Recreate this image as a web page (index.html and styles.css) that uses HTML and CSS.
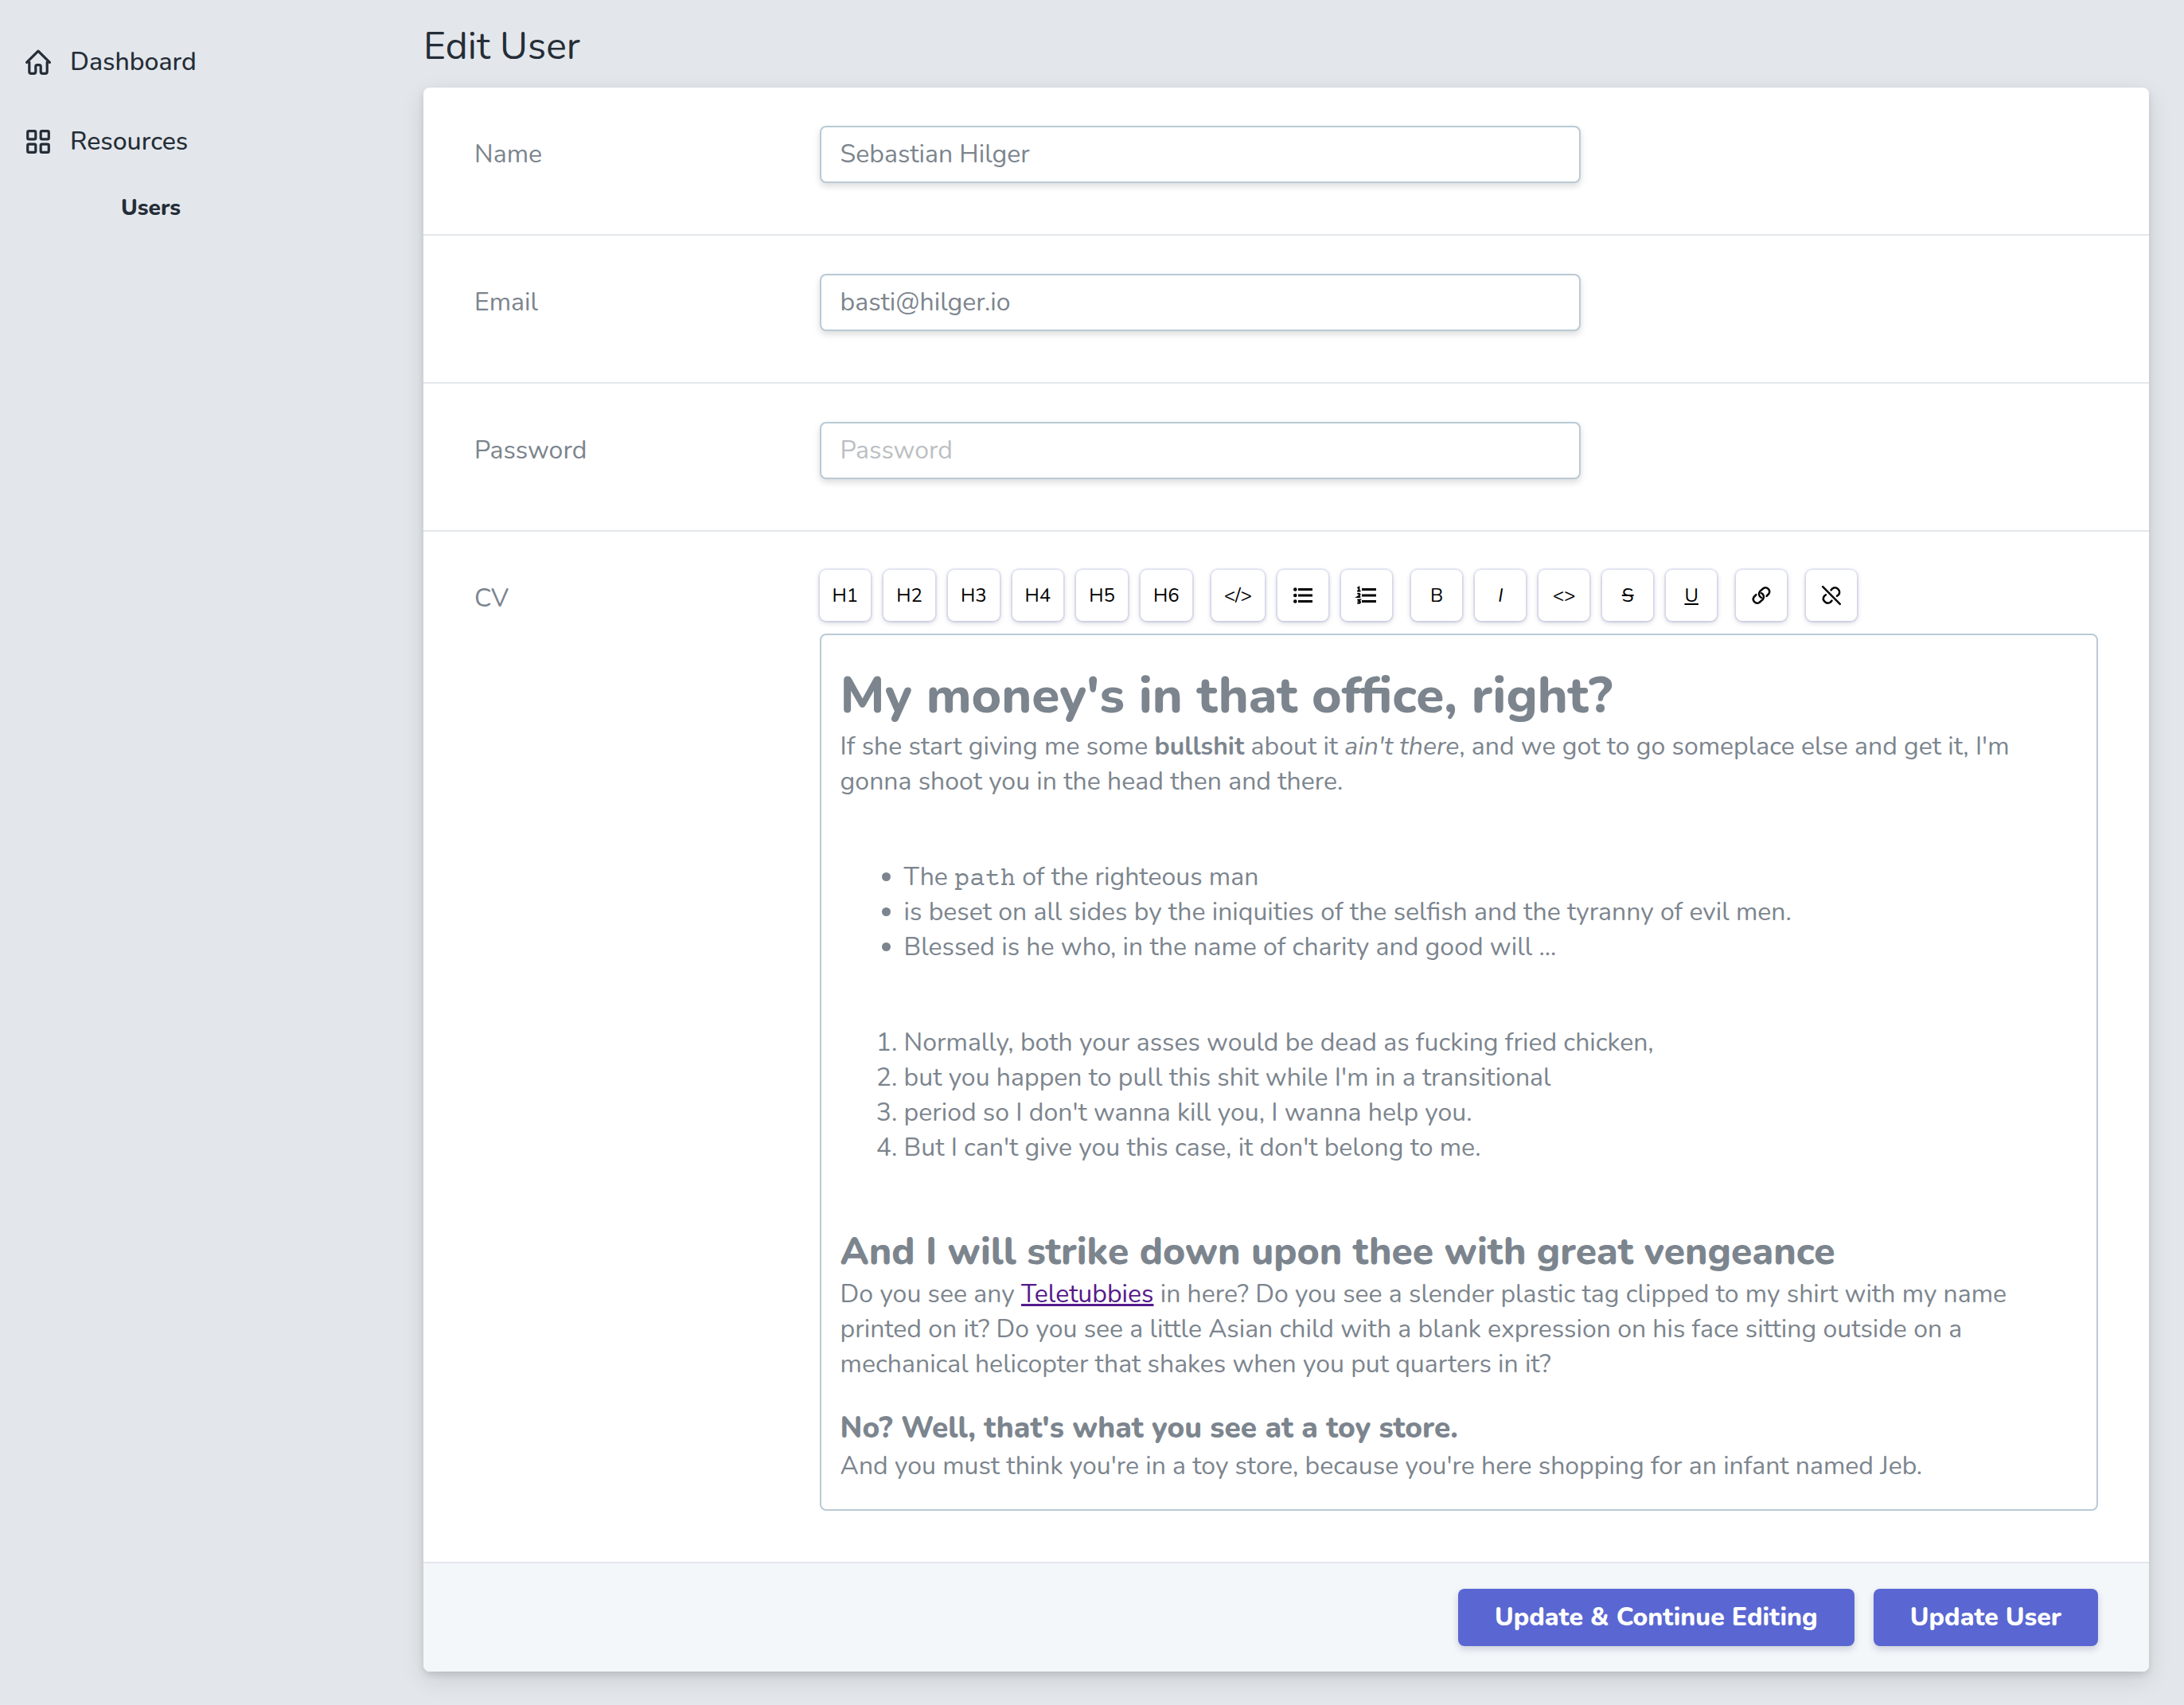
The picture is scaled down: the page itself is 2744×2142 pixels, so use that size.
FILE: index.html
```html
<!DOCTYPE html>
<html lang="en">
<head>
<meta charset="utf-8">
<meta name="viewport" content="width=device-width, initial-scale=1">
<title>Edit User</title>
<link rel="stylesheet" href="styles.css">
</head>
<body>
<div class="app">
  <nav class="sidebar">
    <a class="nav-link" href="#">
      <svg class="nav-icon" viewBox="0 0 20 20"><path class="line" d="M3 10v7.500A1.500 1.500 0 0 0 4.500 19H6.500A1.500 1.500 0 0 0 8 17.500V13.500a1.200 1.200 0 0 1 1.200-1.200h1.600a1.200 1.200 0 0 1 1.200 1.200V17.500A1.500 1.500 0 0 0 13.500 19H15.500A1.500 1.500 0 0 0 17 17.500V10M1 10.300L10 1.300l9 9"/></svg>
      <span>Dashboard</span>
    </a>
    <a class="nav-link" href="#">
      <svg class="nav-icon" viewBox="0 0 20 20"><g class="line"><rect x="1.700" y="1.700" width="6.300" height="6.300" rx="1"/><rect x="12" y="1.700" width="6.300" height="6.300" rx="1"/><rect x="1.700" y="12" width="6.300" height="6.300" rx="1"/><rect x="12" y="12" width="6.300" height="6.300" rx="1"/></g></svg>
      <span>Resources</span>
    </a>
    <a class="nav-sublink" href="#">Users</a>
  </nav>
  <main class="content">
    <h1 class="page-title">Edit User</h1>
    <form class="card">
      <div class="field">
        <label class="field-label" for="name">Name</label>
        <div class="field-body"><input class="text-input" id="name" type="text" value="Sebastian Hilger"></div>
      </div>
      <div class="field">
        <label class="field-label" for="email">Email</label>
        <div class="field-body"><input class="text-input" id="email" type="email" value="basti@hilger.io"></div>
      </div>
      <div class="field">
        <label class="field-label" for="password">Password</label>
        <div class="field-body"><input class="text-input" id="password" type="password" placeholder="Password"></div>
      </div>
      <div class="field">
        <span class="field-label" id="cv-label">CV</span>
        <div class="field-body field-body-wide">
          <div class="toolbar">
            <div class="tool-group">
              <button class="tool" type="button">H1</button>
              <button class="tool" type="button">H2</button>
              <button class="tool" type="button">H3</button>
              <button class="tool" type="button">H4</button>
              <button class="tool" type="button">H5</button>
              <button class="tool" type="button">H6</button>
            </div>
            <div class="tool-group">
              <button class="tool" type="button">&lt;/&gt;</button>
              <button class="tool" type="button" aria-label="Bullet list"><svg class="tool-icon" viewBox="0 0 24 24"><circle cx="2.300" cy="4.500" r="2.300"/><circle cx="2.300" cy="12" r="2.300"/><circle cx="2.300" cy="19.500" r="2.300"/><path d="M6 3h18v3H6zM6 10.500h18v3H6zM6 18h18v3H6z"/></svg></button>
              <button class="tool" type="button" aria-label="Numbered list"><svg class="tool-icon" viewBox="0 0 24 24"><path d="M6 3h18v3H6zM6 10.500h18v3H6zM6 18h18v3H6z"/><path class="numeral" d="M.4 2.600l2-.8v5M.2 6.600h4.300M.5 10.400q1.700-1.200 3 0 .6 1.300-3 3.600h3.800M.4 17.600h3.300L2.200 19.300q2 0 1.800 1.500-.9 1.700-3.600.6"/></svg></button>
            </div>
            <div class="tool-group">
              <button class="tool" type="button">B</button>
              <button class="tool" type="button"><i>I</i></button>
              <button class="tool" type="button">&lt;&gt;</button>
              <button class="tool" type="button"><s>S</s></button>
              <button class="tool" type="button"><u>U</u></button>
            </div>
            <div class="tool-group">
              <button class="tool" type="button" aria-label="Add link"><svg class="tool-icon" viewBox="0 0 24 24"><path class="chain" d="M12 14.800A5 5 0 0 1 10 7.200L14.600 3A5 5 0 0 1 21.400 9.900L18.600 12.800M12 9.200A5 5 0 0 1 14 16.800L9.400 21A5 5 0 0 1 2.600 14.100L5.400 11.200"/></svg></button>
            </div>
            <div class="tool-group">
              <button class="tool" type="button" aria-label="Remove link"><svg class="tool-icon" viewBox="0 0 24 24"><path class="chain" d="M11.500 5.300L13.200 3.400A5.600 5.600 0 0 1 21 11.200L19 12.700M12.500 18.700L10.800 20.600A5.600 5.600 0 0 1 3 12.800L5 11.300M1.200 1.200l21.600 21.600"/></svg></button>
            </div>
          </div>
          <div class="editor" contenteditable="true" role="textbox" aria-multiline="true" aria-labelledby="cv-label" spellcheck="false">
            <h1>My money's in that office, right?</h1>
            <p>If she start giving me some <strong>bullshit</strong> about it <em>ain't there</em>, and we got to go someplace else and get it, I'm gonna shoot you in the head then and there.</p>
            <ul>
              <li>The <code>path</code> of the righteous man</li>
              <li>is beset on all sides by the iniquities of the selfish and the tyranny of evil men.</li>
              <li>Blessed is he who, in the name of charity and good will ...</li>
            </ul>
            <ol>
              <li>Normally, both your asses would be dead as fucking fried chicken,</li>
              <li>but you happen to pull this shit while I'm in a transitional</li>
              <li>period so I don't wanna kill you, I wanna help you.</li>
              <li>But I can't give you this case, it don't belong to me.</li>
            </ol>
            <h2>And I will strike down upon thee with great vengeance</h2>
            <p>Do you see any <a href="#">Teletubbies</a> in here? Do you see a slender plastic tag clipped to my shirt with my name printed on it? Do you see a little Asian child with a blank expression on his face sitting outside on a mechanical helicopter that shakes when you put quarters in it?</p>
            <h3>No? Well, that's what you see at a toy store.</h3>
            <p>And you must think you're in a toy store, because you're here shopping for an infant named Jeb.</p>
          </div>
        </div>
      </div>
      <div class="actions">
        <button class="primary" type="button">Update &amp; Continue Editing</button>
        <button class="primary" type="submit">Update User</button>
      </div>
    </form>
  </main>
</div>
</body>
</html>
```
FILE: styles.css
```css
* { box-sizing: border-box; }
body {
  margin: 0;
  min-height: 100vh;
  background: #e3e7eb;
  color: #7c858e;
  font-family: Nunito, Lato, sans-serif;
  font-size: 32px;
  font-weight: 400;
  line-height: 44px;
}
button, input { font: inherit; }
.app { display: flex; }
.sidebar {
  flex: 0 0 532px;
  display: flex;
  flex-direction: column;
  align-items: flex-start;
  padding: 56px 32px;
}
.nav-link {
  display: flex;
  align-items: center;
  gap: 24px;
  margin-bottom: 56px;
  color: #252d37;
  font-weight: 500;
  text-decoration: none;
}
.nav-icon { width: 32px; height: 32px; overflow: visible; }
.line { fill: none; stroke: #252d37; stroke-width: 2; stroke-linecap: round; stroke-linejoin: round; }
.nav-sublink {
  margin: -17px 0 0 120px;
  color: #252d37;
  font-size: 28px;
  font-weight: 800;
  text-decoration: none;
}
.content { flex: 1; min-width: 0; padding: 30px 44px 42px 0; }
.page-title {
  margin: 0 0 24px;
  color: #252d37;
  font-size: 48px;
  font-weight: 400;
  line-height: 56px;
}
.card {
  border-radius: 8px;
  background: #fff;
  box-shadow: 0 4px 8px rgba(0, 0, 0, .11), 0 10px 30px rgba(0, 0, 0, .11);
}
.field { display: flex; border-bottom: 2px solid #e3e7eb; }
.field-label { width: 20%; padding: 62px 64px 0; }
.field-body { width: 50%; padding: 48px 64px 64px; }
.field-body-wide { width: 80%; }
.text-input {
  display: block;
  width: 100%;
  height: 72px;
  padding: 0 24px 2px;
  border: 2px solid #bacad6;
  border-radius: 8px;
  background: #fff;
  color: #7c858e;
  box-shadow: 0 4px 8px rgba(0, 0, 0, .14);
}
.text-input::placeholder { color: #bcbfc3; opacity: 1; }
.toolbar { display: flex; flex-wrap: wrap; gap: 24px; margin-bottom: 16px; }
.tool-group { display: flex; gap: 16px; }
.tool {
  display: flex;
  align-items: center;
  justify-content: center;
  min-width: 64px;
  height: 64px;
  padding: 0 16px;
  border: 0;
  border-radius: 8px;
  background: #fff;
  color: #000;
  box-shadow: 0 0 0 2px rgba(90, 103, 210, .12), 0 2px 6px rgba(50, 50, 93, .25);
  font-size: 24px;
  line-height: 32px;
}
.tool-icon { width: 24px; height: 24px; overflow: visible; }
.numeral { fill: none; stroke: #000; stroke-width: 2; }
.chain { fill: none; stroke: #000; stroke-width: 2.500; stroke-linecap: round; }
.editor {
  padding: 34px 32px 32px 24px;
  border: 2px solid #bacad6;
  border-radius: 8px;
}
.editor h1, .editor h2, .editor h3 { margin: 0; font-weight: 800; }
.editor h1 { font-size: 64px; line-height: 84px; }
.editor h2 { font-size: 48px; line-height: 64px; }
.editor h3 { margin-top: 32px; font-size: 37px; line-height: 52px; }
.editor p { margin: 0; }
.editor strong { font-weight: 700; }
.editor ul, .editor ol { margin: 76px 0; padding-left: 80px; }
.editor code { font-family: "Courier Prime", "Courier New", monospace; font-size: 32px; font-weight: 400; line-height: 32px; }
.editor a { color: #551a8b; }
.actions {
  display: flex;
  justify-content: flex-end;
  gap: 24px;
  padding: 32px 64px;
  border-radius: 0 0 8px 8px;
  background: #f3f7fa;
}
.primary {
  height: 72px;
  padding: 0 46px;
  border: 0;
  border-radius: 8px;
  background: #5a67d2;
  color: #fff;
  box-shadow: 0 4px 8px rgba(50, 50, 93, .2);
  font-weight: 800;
}
```
